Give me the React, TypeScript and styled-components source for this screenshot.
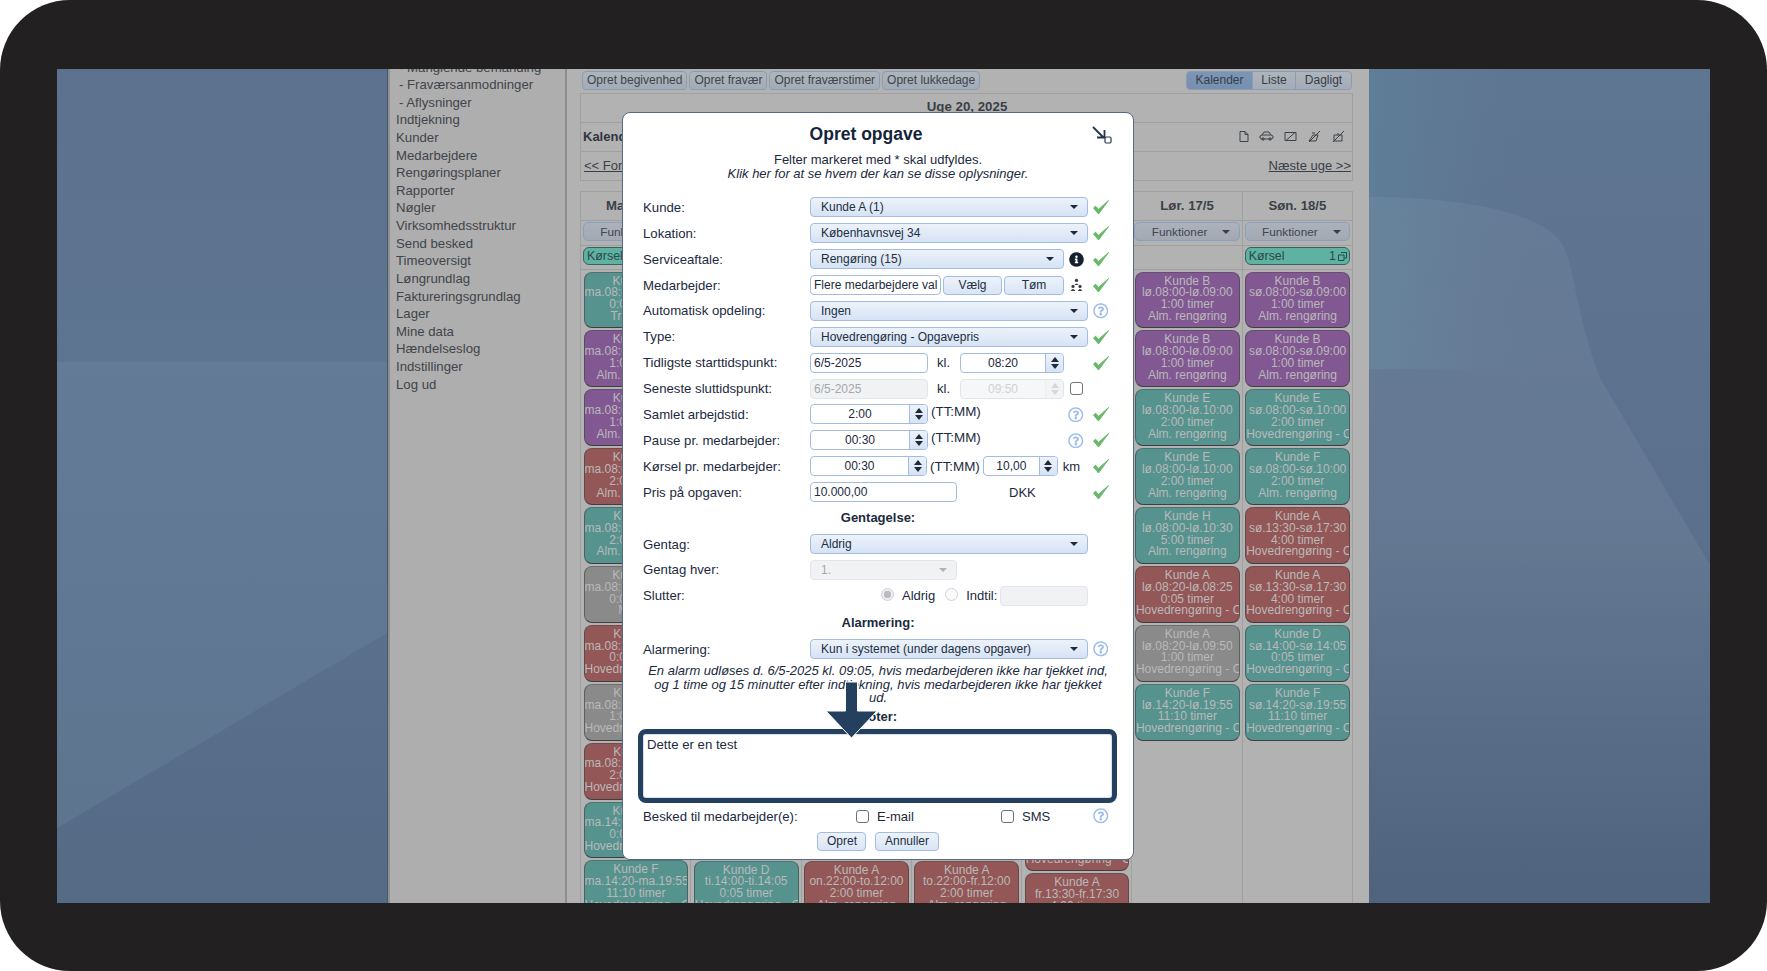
import React from "react";
import styled, { createGlobalStyle } from "styled-components";
import { FaInfoCircle, FaRegQuestionCircle } from "react-icons/fa";

const Global = createGlobalStyle`
  html, body { margin: 0; padding: 0; background: #fff; }
  body { font-family: "Liberation Sans", Arial, sans-serif; overflow: hidden; }
`;

const Frame = styled.div`
  width: 1767px;
  height: 971px;
  box-sizing: border-box;
  background: #222021;
  border-radius: 70px;
  padding: 69px 57px 68px 57px;
`;
const Screen = styled.div`
  position: relative;
  height: 834px;
  display: flex;
  overflow: hidden;
  background: #b1b1b1;
`;
const Desktop = styled.div<{ $w: number }>`
  width: ${(p) => p.$w}px;
  flex: none;
  display: flex;
`;
const Wallpaper = styled.svg`
  width: 100%;
  height: 100%;
  display: block;
`;
const Sidebar = styled.nav`
  width: 180px;
  flex: none;
  box-sizing: border-box;
  background: #aeaeae;
  border-left: 1px solid #46586e;
  border-right: 2px solid #8d8d8d;
  box-shadow: inset 2px 0 0 #8f8f8f;
  overflow: hidden;
`;
const SideList = styled.div`
  margin-top: -10.4px;
  padding-left: 8px;
`;
const SideItem = styled.div<{ $sub?: boolean }>`
  height: 17.62px;
  line-height: 17.62px;
  font-size: 13.2px;
  color: #41444a;
  padding-left: ${(p) => (p.$sub ? 3 : 0)}px;
  white-space: nowrap;
`;
const Main = styled.main`
  width: 802px;
  flex: none;
  box-sizing: border-box;
  padding: 2px 16px 0 13px;
  overflow: hidden;
  background: #b2b2b2;
`;
const Toolbar = styled.div`
  display: flex;
  justify-content: space-between;
  height: 20px;
  margin-left: 2px;
`;
const BtnGroup = styled.div`
  display: flex;
  gap: 2px;
`;
const TopBtn = styled.div`
  height: 19px;
  line-height: 17px;
  box-sizing: border-box;
  padding: 0 4px;
  border: 1px solid #8a9db6;
  border-radius: 4px;
  background: linear-gradient(#b0b5bc, #a3abb6);
  font-size: 12px;
  color: #3d4550;
  white-space: nowrap;
`;
const Segments = styled.div`
  display: flex;
  margin-right: 1px;
`;
const Segment = styled.div<{ $w: number; $on?: boolean }>`
  width: ${(p) => p.$w}px;
  height: 19px;
  line-height: 17px;
  text-align: center;
  box-sizing: border-box;
  border: 1px solid #8a9db6;
  margin-left: -1px;
  background: ${(p) => (p.$on ? "linear-gradient(#7d95b5,#7890b0)" : "linear-gradient(#b0b5bc,#a3abb6)")};
  font-size: 12px;
  color: #363e49;
  &:first-child { border-radius: 4px 0 0 4px; }
  &:last-child { border-radius: 0 4px 4px 0; }
`;
const TitleBox = styled.div`
  margin-top: 2px;
  border: 1px solid #a0a0a0;
  box-sizing: border-box;
  height: 88px;
`;
const TitleRow = styled.div<{ $h: number }>`
  height: ${(p) => p.$h}px;
  box-sizing: border-box;
  border-bottom: 1px solid #a0a0a0;
  display: flex;
  align-items: center;
  justify-content: space-between;
  padding: 0 1px 0 2px;
  &:last-child { border-bottom: 0; }
`;
const WeekTitle = styled.div`
  flex: 1;
  text-align: center;
  font-size: 13.3px;
  font-weight: bold;
  color: #3a3f47;
  padding-bottom: 4px;
`;
const CalLabel = styled.div`
  font-size: 13px;
  font-weight: bold;
  color: #2f3640;
  padding-bottom: 2px;
`;
const NavLink = styled.span`
  font-size: 13px;
  color: #3a3f47;
  text-decoration: underline;
  padding: 0 0 2px 1px;
`;
const IconStrip = styled.div`
  display: flex;
  gap: 9px;
  padding: 0 5px 2px 0;
  color: #3d4248;
`;
const WeekGrid = styled.div`
  margin-top: 10px;
  display: grid;
  grid-template-columns: repeat(7, 1fr);
  border-top: 1px solid #a0a0a0;
  border-right: 1px solid #a0a0a0;
  height: 720px;
`;
const DayCol = styled.div`
  border-left: 1px solid #a0a0a0;
  min-width: 0;
`;
const DayHead = styled.div`
  height: 29px;
  line-height: 27px;
  text-align: center;
  font-size: 13.2px;
  font-weight: bold;
  color: #3c4048;
  border-bottom: 1px solid #a0a0a0;
  box-sizing: border-box;
`;
const FnRow = styled.div`
  height: 25px;
  box-sizing: border-box;
  padding: 1px 2px 0;
  border-bottom: 1px solid #a0a0a0;
`;
const FnBtn = styled.div`
  height: 19px;
  box-sizing: border-box;
  border: 1px solid #8aa0bd;
  border-radius: 5px;
  background: linear-gradient(#acb2bb, #a2a9b4);
  font-size: 11.8px;
  color: #3f4650;
  display: flex;
  align-items: center;
  justify-content: center;
  gap: 15px;
  padding-left: 8px;
`;
const FnCaret = styled.span`
  width: 0;
  height: 0;
  border-left: 4.5px solid transparent;
  border-right: 4.5px solid transparent;
  border-top: 4px solid #3a3f47;
`;
const TagRow = styled.div`
  height: 24px;
  box-sizing: border-box;
  padding: 1px 2px 0;
  border-bottom: 1px solid #a0a0a0;
`;
const Tag = styled.div`
  height: 18px;
  box-sizing: border-box;
  border: 1px solid #39625f;
  border-radius: 6px;
  background: #5fb1a2;
  color: #294a47;
  font-size: 12.4px;
  display: flex;
  justify-content: space-between;
  align-items: center;
  padding: 0 2px 0 3px;
`;
const TagCount = styled.span`
  display: inline-flex;
  align-items: center;
  gap: 2px;
`;
const CardList = styled.div<{ $skip?: number; $extra?: number }>`
  padding: ${(p) => 1.5 + (p.$extra ?? 0) + (p.$skip ?? 0) * 58.9}px 2px 0 2.5px;
`;
const Card = styled.div<{ $c: string }>`
  height: 56.9px;
  margin-bottom: 2px;
  box-sizing: border-box;
  padding-top: 3px;
  border-radius: 8px;
  border: 1px solid rgba(60, 60, 60, .55);
  border-top-color: rgba(60, 60, 60, .35);
  border-bottom: 1.5px solid #3f3f3f;
  background: ${(p) => p.$c};
  color: #b9b9b9;
  font-size: 12px;
  line-height: 11.8px;
  text-align: center;
  overflow: hidden;
`;
const CardLine = styled.div`
  white-space: nowrap;
`;

/* modal */
const Modal = styled.section`
  position: absolute;
  left: 565px;
  top: 43px;
  width: 512px;
  height: 748px;
  box-sizing: border-box;
  background: #fff;
  border: 1px solid #566a85;
  border-radius: 8px;
  padding: 11px 20px 0;
  color: #1b2a3e;
  font-size: 13px;
`;
const ModalTitle = styled.h2`
  margin: 0;
  font-size: 17.5px;
  line-height: 20px;
  font-weight: bold;
  text-align: center;
  padding-right: 24px;
  color: #14243a;
`;
const CloseIcon = styled.svg`
  position: absolute;
  right: 21px;
  top: 13px;
`;
const Desc = styled.div`
  margin-top: 9.4px;
  margin-bottom: 14.2px;
  text-align: center;
  font-size: 13px;
  line-height: 13.4px;
`;
const DescEm = styled.div`
  font-style: italic;
`;
const Row = styled.div`
  height: 25.9px;
  display: grid;
  grid-template-columns: 167px 254px 24px 25px;
  align-items: center;
`;
const Label = styled.div`
  font-size: 13.2px;
  white-space: nowrap;
`;
const Wide = styled.div`
  grid-column: span 2;
  display: flex;
  align-items: center;
`;
const Cell = styled.div`
  display: flex;
  align-items: center;
  white-space: nowrap;
`;
const IconCell = styled.div`
  display: flex;
  align-items: center;
  justify-content: center;
`;
const CheckCell = styled(IconCell)`
  grid-column: 4;
`;
const Select = styled.div<{ $w?: number; $off?: boolean }>`
  width: ${(p) => (p.$w ? `${p.$w}px` : "100%")};
  height: 20px;
  box-sizing: border-box;
  border: 1px solid ${(p) => (p.$off ? "#e2e6ec" : "#a3bce0")};
  border-radius: 4px;
  background: ${(p) => (p.$off ? "#f1f2f4" : "linear-gradient(#edf2fa, #d6e3f5)")};
  color: ${(p) => (p.$off ? "#a5a8ad" : "#222f41")};
  font-size: 12px;
  padding: 0 9px 0 10px;
  display: flex;
  align-items: center;
  justify-content: space-between;
`;
const Caret = styled.span<{ $off?: boolean }>`
  width: 0;
  height: 0;
  border-left: 4px solid transparent;
  border-right: 4px solid transparent;
  border-top: 4px solid ${(p) => (p.$off ? "#b0b3b8" : "#1e2a3a")};
`;
const Field = styled.div<{ $w: number; $off?: boolean }>`
  width: ${(p) => p.$w}px;
  height: 20px;
  box-sizing: border-box;
  flex: none;
  border: 1px solid ${(p) => (p.$off ? "#e2e6ec" : "#a3bce0")};
  border-radius: 4px;
  background: ${(p) => (p.$off ? "#f1f2f4" : "#fff")};
  color: ${(p) => (p.$off ? "#a5a8ad" : "#1b2a3e")};
  font-size: 12px;
  line-height: 18px;
  padding: 0 3px;
  overflow: hidden;
  white-space: nowrap;
`;
const UntilField = styled(Field)`
  margin-left: -7px;
`;
const Spin = styled.div<{ $w: number; $off?: boolean }>`
  width: ${(p) => p.$w}px;
  height: 20px;
  box-sizing: border-box;
  border: 1px solid ${(p) => (p.$off ? "#e2e6ec" : "#a3bce0")};
  border-radius: 4px;
  background: ${(p) => (p.$off ? "#f6f7f8" : "#fff")};
  color: ${(p) => (p.$off ? "#d0d2d5" : "#1b2a3e")};
  font-size: 12px;
  display: flex;
  align-items: stretch;
  flex: none;
`;
const SpinValue = styled.div`
  flex: 1;
  text-align: center;
  line-height: 18px;
`;
const SpinArrows = styled.div<{ $off?: boolean }>`
  width: 18px;
  box-sizing: border-box;
  border-left: 1px solid ${(p) => (p.$off ? "#eceef1" : "#a3bce0")};
  border-radius: 0 3px 3px 0;
  background: ${(p) => (p.$off ? "#f3f4f6" : "linear-gradient(#edf2fa, #d6e3f5)")};
  display: flex;
  flex-direction: column;
  align-items: center;
  justify-content: center;
  gap: 2px;
`;
const ArrowUp = styled.span<{ $off?: boolean }>`
  width: 0;
  height: 0;
  border-left: 4px solid transparent;
  border-right: 4px solid transparent;
  border-bottom: 5px solid ${(p) => (p.$off ? "#d5d7da" : "#1e2a3a")};
`;
const ArrowDown = styled.span<{ $off?: boolean }>`
  width: 0;
  height: 0;
  border-left: 4px solid transparent;
  border-right: 4px solid transparent;
  border-top: 5px solid ${(p) => (p.$off ? "#d5d7da" : "#1e2a3a")};
`;
const SmallBtn = styled.div<{ $w: number }>`
  width: ${(p) => p.$w}px;
  height: 19px;
  box-sizing: border-box;
  margin-left: 2px;
  border: 1px solid #a3bce0;
  border-radius: 4px;
  background: linear-gradient(#edf2fa, #d9e5f5);
  font-size: 12px;
  line-height: 17px;
  text-align: center;
  color: #222f41;
`;
const Kl = styled.span`
  font-size: 13px;
  margin: 0 10px 0 9px;
  width: 13px;
`;
const Hint = styled.span`
  font-size: 13.4px;
  margin-left: 3px;
`;
const HintTop = styled(Hint)`
  margin-top: -5px;
`;
const KmSpin = styled.div`
  margin-left: 3px;
`;
const Km = styled.span`
  margin-left: 5px;
  font-size: 13px;
`;
const Dkk = styled.span`
  margin-left: 52px;
  font-size: 13px;
`;
const Heading = styled.div`
  height: 26px;
  line-height: 26px;
  text-align: center;
  font-weight: bold;
  font-size: 13px;
`;
const AlarmHeading = styled(Heading)`
  height: 27.5px;
  line-height: 27.5px;
`;
const Check = styled.span`
  width: 13px;
  height: 13px;
  box-sizing: border-box;
  border: 1.5px solid #6d727c;
  border-radius: 3px;
  display: inline-block;
  flex: none;
`;
const Radio = styled.span<{ $on?: boolean }>`
  width: 13px;
  height: 13px;
  box-sizing: border-box;
  border-radius: 50%;
  border: 1px solid #cfd1d5;
  background: ${(p) => (p.$on ? "radial-gradient(circle, #b9bcc1 0 3.5px, #eee 4px)" : "#fafafa")};
  flex: none;
  margin: -3px 8px 0 0;
`;
const RadioText = styled.span`
  font-size: 13px;
  color: #1b2a3e;
  margin-right: 10px;
`;
const SlutRow = styled(Wide)`
  padding-left: 71px;
`;
const AlarmText = styled.div`
  margin-top: 2px;
  font-style: italic;
  text-align: center;
  font-size: 13px;
  line-height: 13.4px;
`;
const NoteBox = styled.div`
  margin: -1px 0 0 -5px;
  height: 74px;
  width: 479px;
  box-sizing: border-box;
  border: 5px solid #25405f;
  border-radius: 8px;
  padding: 3px 4px;
  font-size: 13.2px;
  box-shadow: inset 0 0 0 1px #d5e1f2;
  color: #1b2a3e;
`;
const BeskedRow = styled.div`
  height: 25.6px;
  display: grid;
  grid-template-columns: 213px 145px 88px 24px;
  align-items: center;
`;
const CheckLabel = styled.div`
  display: flex;
  align-items: center;
  gap: 8px;
  font-size: 13px;
`;
const Actions = styled.div`
  margin-top: 3.4px;
  display: flex;
  justify-content: center;
  gap: 9px;
`;
const ActionBtn = styled.div`
  height: 19px;
  box-sizing: border-box;
  padding: 0 8.5px;
  border: 1px solid #a3bce0;
  border-radius: 4px;
  background: linear-gradient(#edf2fa, #d9e5f5);
  font-size: 12px;
  line-height: 17px;
  color: #222f41;
`;
const BigArrow = styled.svg`
  position: absolute;
  left: 202px;
  top: 567px;
`;

const OK = () => (
  <svg width="18" height="16" viewBox="0 0 18 16">
    <path d="M1.5 9 L6.5 15 L16.5 1.5 L6.6 10.4 L3.6 7.2 Z" fill="#69b869" stroke="#69b869" strokeWidth="1" strokeLinejoin="round" />
  </svg>
);
const Q = () => <FaRegQuestionCircle size={15.5} color="#9dbcec" />;
const Tree = () => (
  <svg width="13" height="14" viewBox="0 0 13 14" fill="#3a3f47">
    <circle cx="6.5" cy="2.4" r="1.7" />
    <path d="M4.5 7 Q6.5 3.8 8.5 7 Z" />
    <circle cx="3" cy="8.4" r="1.6" />
    <path d="M.6 13 Q3 9.2 5.4 13 Z" />
    <circle cx="10" cy="8.4" r="1.6" />
    <path d="M7.6 13 Q10 9.2 12.4 13 Z" />
  </svg>
);

const WallLeft = () => (
  <Wallpaper viewBox="0 0 330 834" preserveAspectRatio="none">
    <defs>
      <linearGradient id="wl" x1="0" y1="0" x2="0" y2="1">
        <stop offset="0" stopColor="#5c718d" />
        <stop offset=".35" stopColor="#5e7592" />
        <stop offset="1" stopColor="#556a85" />
      </linearGradient>
      <linearGradient id="wlb" x1="0" y1="0" x2="0" y2="1">
        <stop offset="0" stopColor="#647b97" />
        <stop offset="1" stopColor="#5e7590" />
      </linearGradient>
    </defs>
    <rect width="330" height="834" fill="url(#wl)" />
    <path d="M0 293 H330 V564 L0 759 Z" fill="url(#wlb)" />
  </Wallpaper>
);
const WallRight = () => (
  <Wallpaper viewBox="0 0 341 834" preserveAspectRatio="none">
    <defs>
      <linearGradient id="wr" x1="0" y1="0" x2="0" y2="1">
        <stop offset="0" stopColor="#5f7692" />
        <stop offset=".55" stopColor="#5b708c" />
        <stop offset="1" stopColor="#4f627e" />
      </linearGradient>
      <linearGradient id="wrh" x1="0" y1="0" x2="1" y2="0">
        <stop offset="0" stopColor="#5f8099" stopOpacity=".8" />
        <stop offset=".5" stopColor="#5f7692" stopOpacity="0" />
      </linearGradient>
      <linearGradient id="wrs" x1="0" y1="0" x2="0" y2="1">
        <stop offset="0" stopColor="#fff" stopOpacity=".05" />
        <stop offset=".45" stopColor="#fff" stopOpacity=".06" />
        <stop offset="1" stopColor="#fff" stopOpacity="0" />
      </linearGradient>
    </defs>
    <rect width="341" height="834" fill="url(#wr)" />
    <rect width="341" height="300" fill="url(#wrh)" />
    <path d="M0 128 C100 128 170 145 191 172 C205 190 205 240 231 309 L341 496 V834 H0 Z" fill="url(#wrs)" />
  </Wallpaper>
);

const SpinBox = ({ w, v, off }: { w: number; v: string; off?: boolean }) => (
  <Spin $w={w} $off={off}>
    <SpinValue>{v}</SpinValue>
    <SpinArrows $off={off}>
      <ArrowUp $off={off} />
      <ArrowDown $off={off} />
    </SpinArrows>
  </Spin>
);

const C = { p: "#825893", t: "#56938f", r: "#945757", g: "#8a8a8a" };
type CardT = [string, string, string, string, string];
const H = "Hovedrengøring - Opgavepris";
const A = "Alm. rengøring";

const side = [
  ["- Manglende bemanding", 1], ["- Fraværsanmodninger", 1], ["- Aflysninger", 1],
  ["Indtjekning"], ["Kunder"], ["Medarbejdere"], ["Rengøringsplaner"], ["Rapporter"], ["Nøgler"],
  ["Virksomhedsstruktur"], ["Send besked"], ["Timeoversigt"], ["Løngrundlag"], ["Faktureringsgrundlag"],
  ["Lager"], ["Mine data"], ["Hændelseslog"], ["Indstillinger"], ["Log ud"],
] as [string, number?][];

const days: { name: string; tag?: boolean; skip?: number; extra?: number; cards: CardT[] }[] = [
  {
    name: "Man. 12/5", tag: true,
    cards: [
      [C.t, "Kunde C", "ma.08:00-ma.08:05", "0:05 timer", "Transport"],
      [C.p, "Kunde B", "ma.08:00-ma.09:00", "1:00 timer", A],
      [C.p, "Kunde B", "ma.08:00-ma.09:00", "1:00 timer", A],
      [C.r, "Kunde E", "ma.08:00-ma.10:00", "2:00 timer", A],
      [C.t, "Kunde F", "ma.08:00-ma.10:00", "2:00 timer", A],
      [C.g, "Kunde G", "ma.08:20-ma.08:25", "0:05 timer", "Måling"],
      [C.r, "Kunde A", "ma.08:20-ma.08:25", "0:05 timer", H],
      [C.g, "Kunde A", "ma.08:20-ma.09:50", "1:00 timer", H],
      [C.r, "Kunde A", "ma.08:20-ma.10:20", "2:00 timer", H],
      [C.t, "Kunde D", "ma.14:00-ma.14:05", "0:05 timer", H],
      [C.t, "Kunde F", "ma.14:20-ma.19:55", "11:10 timer", H],
    ],
  },
  { name: "Tir. 13/5", skip: 10, cards: [[C.t, "Kunde D", "ti.14:00-ti.14:05", "0:05 timer", H]] },
  { name: "Ons. 14/5", skip: 10, cards: [[C.r, "Kunde A", "on.22:00-to.12:00", "2:00 timer", A]] },
  { name: "Tor. 15/5", skip: 10, cards: [[C.r, "Kunde A", "to.22:00-fr.12:00", "2:00 timer", A]] },
  {
    name: "Fre. 16/5", skip: 9, extra: 13,
    cards: [
      [C.r, "Kunde A", "fr.08:20-fr.08:25", "0:05 timer", H],
      [C.r, "Kunde A", "fr.13:30-fr.17:30", "4:00 timer", H],
    ],
  },
  {
    name: "Lør. 17/5",
    cards: [
      [C.p, "Kunde B", "lø.08:00-lø.09:00", "1:00 timer", A],
      [C.p, "Kunde B", "lø.08:00-lø.09:00", "1:00 timer", A],
      [C.t, "Kunde E", "lø.08:00-lø.10:00", "2:00 timer", A],
      [C.t, "Kunde E", "lø.08:00-lø.10:00", "2:00 timer", A],
      [C.t, "Kunde H", "lø.08:00-lø.10:30", "5:00 timer", A],
      [C.r, "Kunde A", "lø.08:20-lø.08:25", "0:05 timer", H],
      [C.g, "Kunde A", "lø.08:20-lø.09:50", "1:00 timer", H],
      [C.t, "Kunde F", "lø.14:20-lø.19:55", "11:10 timer", H],
    ],
  },
  {
    name: "Søn. 18/5", tag: true,
    cards: [
      [C.p, "Kunde B", "sø.08:00-sø.09:00", "1:00 timer", A],
      [C.p, "Kunde B", "sø.08:00-sø.09:00", "1:00 timer", A],
      [C.t, "Kunde E", "sø.08:00-sø.10:00", "2:00 timer", H],
      [C.t, "Kunde F", "sø.08:00-sø.10:00", "2:00 timer", A],
      [C.r, "Kunde A", "sø.13:30-sø.17:30", "4:00 timer", H],
      [C.r, "Kunde A", "sø.13:30-sø.17:30", "4:00 timer", H],
      [C.t, "Kunde D", "sø.14:00-sø.14:05", "0:05 timer", H],
      [C.t, "Kunde F", "sø.14:20-sø.19:55", "11:10 timer", H],
    ],
  },
];

export default function App() {
  return (
    <Frame>
      <Global />
      <Screen>
        <Desktop $w={330}><WallLeft /></Desktop>
        <Sidebar>
          <SideList>
            {side.map(([t, s]) => (
              <SideItem key={t} $sub={!!s}>{t}</SideItem>
            ))}
          </SideList>
        </Sidebar>
        <Main>
          <Toolbar>
            <BtnGroup>
              <TopBtn>Opret begivenhed</TopBtn>
              <TopBtn>Opret fravær</TopBtn>
              <TopBtn>Opret fraværstimer</TopBtn>
              <TopBtn>Opret lukkedage</TopBtn>
            </BtnGroup>
            <Segments>
              <Segment $w={67} $on>Kalender</Segment>
              <Segment $w={44}>Liste</Segment>
              <Segment $w={57}>Dagligt</Segment>
            </Segments>
          </Toolbar>
          <TitleBox>
            <TitleRow $h={29}><WeekTitle>Uge 20, 2025</WeekTitle></TitleRow>
            <TitleRow $h={29}>
              <CalLabel>Kalender</CalLabel>
              <IconStrip>
                <svg width="13" height="13" viewBox="0 0 13 13" fill="none" stroke="currentColor"><path d="M3 1.5h5l3 3v7H3zM8 1.5v3h3" /></svg>
                <svg width="15" height="13" viewBox="0 0 15 13" fill="none" stroke="currentColor"><path d="M1 8V6l2-1 2-3h5l2 3 2 1v2l-1.5 1h-10zM3 5h9" /><circle cx="4" cy="9" r="1.2" /><circle cx="11" cy="9" r="1.2" /></svg>
                <svg width="15" height="13" viewBox="0 0 15 13" fill="none" stroke="currentColor"><path d="M2 2.5h11v8H2zM3 10.5l9-8" /></svg>
                <svg width="15" height="13" viewBox="0 0 15 13" fill="none" stroke="currentColor"><path d="M2 11h7l2-6H6zM2 12l11-11M5 3h3" /></svg>
                <svg width="15" height="13" viewBox="0 0 15 13" fill="none" stroke="currentColor"><path d="M3 5h8v6H3zM2 12l11-11M7 5V3" /></svg>
              </IconStrip>
            </TitleRow>
            <TitleRow $h={28}>
              <NavLink>&lt;&lt; Forrige uge</NavLink>
              <NavLink>Næste uge &gt;&gt;</NavLink>
            </TitleRow>
          </TitleBox>
          <WeekGrid>
            {days.map((d) => (
              <DayCol key={d.name}>
                <DayHead>{d.name}</DayHead>
                <FnRow><FnBtn>Funktioner <FnCaret /></FnBtn></FnRow>
                <TagRow>
                  {d.tag && (
                    <Tag>
                      Kørsel
                      <TagCount>
                        1
                        <svg width="9" height="9" viewBox="0 0 9 9" fill="none" stroke="#294a47"><path d="M3 .5h5.5V6H6M.5 3H6v5.5H.5z" /></svg>
                      </TagCount>
                    </Tag>
                  )}
                </TagRow>
                <CardList $skip={d.skip} $extra={d.extra}>
                  {d.cards.map(([c, a, b, e, f], i) => (
                    <Card key={i} $c={c}>
                      <CardLine>{a}</CardLine>
                      <CardLine>{b}</CardLine>
                      <CardLine>{e}</CardLine>
                      <CardLine>{f}</CardLine>
                    </Card>
                  ))}
                </CardList>
              </DayCol>
            ))}
          </WeekGrid>
        </Main>
        <Desktop $w={341}><WallRight /></Desktop>

        <Modal>
          <ModalTitle>Opret opgave</ModalTitle>
          <CloseIcon width="20" height="18" viewBox="0 0 20 18" fill="none" stroke="#25364c">
            <path d="M1 1 L12 12 M5 11.5 H12.5 V4" strokeWidth="1.8" />
            <rect x="13" y="11" width="6" height="6" rx="1.2" strokeWidth="1.2" />
          </CloseIcon>
          <Desc>
            <div>Felter markeret med * skal udfyldes.</div>
            <DescEm>Klik her for at se hvem der kan se disse oplysninger.</DescEm>
          </Desc>

          <Row><Label>Kunde:</Label><Wide><Select>Kunde A (1)<Caret /></Select></Wide><CheckCell><OK /></CheckCell></Row>
          <Row><Label>Lokation:</Label><Wide><Select>Københavnsvej 34<Caret /></Select></Wide><CheckCell><OK /></CheckCell></Row>
          <Row>
            <Label>Serviceaftale:</Label>
            <Cell><Select>Rengøring (15)<Caret /></Select></Cell>
            <IconCell><FaInfoCircle size={15} color="#14202e" /></IconCell>
            <CheckCell><OK /></CheckCell>
          </Row>
          <Row>
            <Label>Medarbejder:</Label>
            <Cell>
              <Field $w={131}>Flere medarbejdere val</Field>
              <SmallBtn $w={59}>Vælg</SmallBtn>
              <SmallBtn $w={60}>Tøm</SmallBtn>
            </Cell>
            <IconCell><Tree /></IconCell>
            <CheckCell><OK /></CheckCell>
          </Row>
          <Row><Label>Automatisk opdeling:</Label><Wide><Select>Ingen<Caret /></Select></Wide><CheckCell><Q /></CheckCell></Row>
          <Row><Label>Type:</Label><Wide><Select>Hovedrengøring - Opgavepris<Caret /></Select></Wide><CheckCell><OK /></CheckCell></Row>
          <Row>
            <Label>Tidligste starttidspunkt:</Label>
            <Cell><Field $w={118}>6/5-2025</Field><Kl>kl.</Kl><SpinBox w={104} v="08:20" /></Cell>
            <span />
            <CheckCell><OK /></CheckCell>
          </Row>
          <Row>
            <Label>Seneste sluttidspunkt:</Label>
            <Cell><Field $w={118} $off>6/5-2025</Field><Kl>kl.</Kl><SpinBox w={104} v="09:50" off /></Cell>
            <IconCell><Check /></IconCell>
          </Row>
          <Row>
            <Label>Samlet arbejdstid:</Label>
            <Cell><SpinBox w={118} v="2:00" /><HintTop>(TT:MM)</HintTop></Cell>
            <IconCell><Q /></IconCell>
            <CheckCell><OK /></CheckCell>
          </Row>
          <Row>
            <Label>Pause pr. medarbejder:</Label>
            <Cell><SpinBox w={118} v="00:30" /><HintTop>(TT:MM)</HintTop></Cell>
            <IconCell><Q /></IconCell>
            <CheckCell><OK /></CheckCell>
          </Row>
          <Row>
            <Label>Kørsel pr. medarbejder:</Label>
            <Wide>
              <SpinBox w={117} v="00:30" />
              <Hint>(TT:MM)</Hint>
              <KmSpin><SpinBox w={75} v="10,00" /></KmSpin>
              <Km>km</Km>
            </Wide>
            <CheckCell><OK /></CheckCell>
          </Row>
          <Row>
            <Label>Pris på opgaven:</Label>
            <Cell><Field $w={147}>10.000,00</Field><Dkk>DKK</Dkk></Cell>
            <span />
            <CheckCell><OK /></CheckCell>
          </Row>
          <Heading>Gentagelse:</Heading>
          <Row><Label>Gentag:</Label><Wide><Select>Aldrig<Caret /></Select></Wide></Row>
          <Row><Label>Gentag hver:</Label><Cell><Select $w={147} $off>1.<Caret $off /></Select></Cell></Row>
          <Row>
            <Label>Slutter:</Label>
            <SlutRow>
              <Radio $on />
              <RadioText>Aldrig</RadioText>
              <Radio />
              <RadioText>Indtil:</RadioText>
              <UntilField $w={88} $off />
            </SlutRow>
          </Row>
          <AlarmHeading>Alarmering:</AlarmHeading>
          <Row><Label>Alarmering:</Label><Wide><Select>Kun i systemet (under dagens opgaver)<Caret /></Select></Wide><CheckCell><Q /></CheckCell></Row>
          <AlarmText>
            En alarm udløses d. 6/5-2025 kl. 09:05, hvis medarbejderen ikke har tjekket ind,
            <br />
            og 1 time og 15 minutter efter indtjekning, hvis medarbejderen ikke har tjekket
            <br />
            ud.
          </AlarmText>
          <Heading>Noter:</Heading>
          <NoteBox>Dette er en test</NoteBox>
          <BeskedRow>
            <Label>Besked til medarbejder(e):</Label>
            <CheckLabel><Check />E-mail</CheckLabel>
            <CheckLabel><Check />SMS</CheckLabel>
            <IconCell><Q /></IconCell>
          </BeskedRow>
          <Actions>
            <ActionBtn>Opret</ActionBtn>
            <ActionBtn>Annuller</ActionBtn>
          </Actions>
          <BigArrow width="53" height="60" viewBox="0 0 53 60">
            <path d="M20.5 2 H32.5 V31 H52 L26.5 58 L1 31 H20.5 Z" fill="#25405f" stroke="#fff" strokeWidth="1" />
          </BigArrow>
        </Modal>
      </Screen>
    </Frame>
  );
}
